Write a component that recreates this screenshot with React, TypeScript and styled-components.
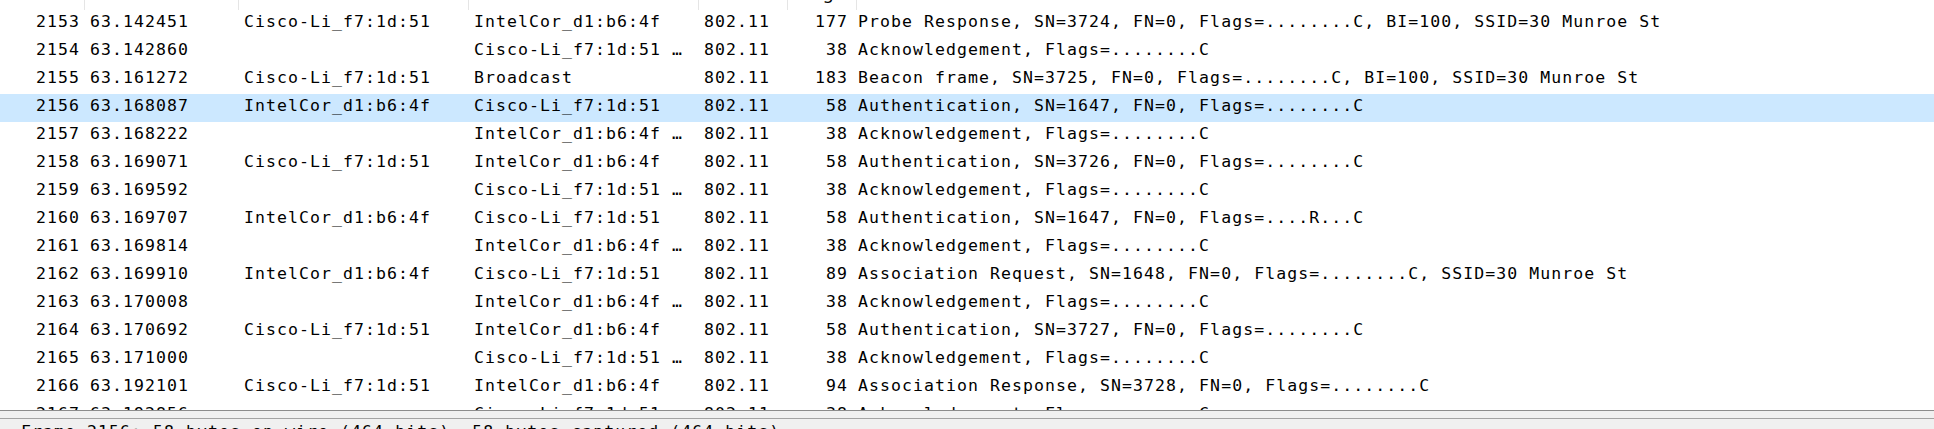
import React from "react";
import styled, { createGlobalStyle } from "styled-components";

const GlobalStyle = createGlobalStyle`
  html, body {
    margin: 0;
    padding: 0;
    background: #ffffff;
  }
  body {
    width: 1934px;
    height: 429px;
    overflow: hidden;
  }
`;

const MONO = `"DejaVu Sans Mono", "Liberation Mono", monospace`;

type Align = "left" | "right";

interface Column {
  key: string;
  label: string;
  width: number | null;
  align: Align;
}

const columns: Column[] = [
  { key: "no", label: "No.", width: 84, align: "right" },
  { key: "time", label: "Time", width: 154, align: "left" },
  { key: "src", label: "Source", width: 230, align: "left" },
  { key: "dst", label: "Destination", width: 230, align: "left" },
  { key: "proto", label: "Protocol", width: 89, align: "left" },
  { key: "len", label: "Length", width: 65, align: "right" },
  { key: "info", label: "Info", width: null, align: "left" },
];

type Packet = [string, string, string, string, string, string, string];

const C = "Cisco-Li_f7:1d:51";
const I = "IntelCor_d1:b6:4f";
const CE = "Cisco-Li_f7:1d:51 \u2026";
const IE = "IntelCor_d1:b6:4f \u2026";
const ACK = "Acknowledgement, Flags=........C";

const packets: Packet[] = [
  ["2153", "63.142451", C, I, "802.11", "177", "Probe Response, SN=3724, FN=0, Flags=........C, BI=100, SSID=30 Munroe St"],
  ["2154", "63.142860", "", CE, "802.11", "38", ACK],
  ["2155", "63.161272", C, "Broadcast", "802.11", "183", "Beacon frame, SN=3725, FN=0, Flags=........C, BI=100, SSID=30 Munroe St"],
  ["2156", "63.168087", I, C, "802.11", "58", "Authentication, SN=1647, FN=0, Flags=........C"],
  ["2157", "63.168222", "", IE, "802.11", "38", ACK],
  ["2158", "63.169071", C, I, "802.11", "58", "Authentication, SN=3726, FN=0, Flags=........C"],
  ["2159", "63.169592", "", CE, "802.11", "38", ACK],
  ["2160", "63.169707", I, C, "802.11", "58", "Authentication, SN=1647, FN=0, Flags=....R...C"],
  ["2161", "63.169814", "", IE, "802.11", "38", ACK],
  ["2162", "63.169910", I, C, "802.11", "89", "Association Request, SN=1648, FN=0, Flags=........C, SSID=30 Munroe St"],
  ["2163", "63.170008", "", IE, "802.11", "38", ACK],
  ["2164", "63.170692", C, I, "802.11", "58", "Authentication, SN=3727, FN=0, Flags=........C"],
  ["2165", "63.171000", "", CE, "802.11", "38", ACK],
  ["2166", "63.192101", C, I, "802.11", "94", "Association Response, SN=3728, FN=0, Flags=........C"],
  ["2167", "63.192856", "", CE, "802.11", "38", ACK],
];

const SELECTED = "2156";

const Window = styled.div`
  display: flex;
  flex-direction: column;
  width: 1934px;
  height: 429px;
  overflow: hidden;
  background: #ffffff;
`;

const PacketList = styled.div`
  flex: 0 0 410px;
  display: flex;
  flex-direction: column;
  overflow: hidden;
  background: #ffffff;
`;

const HeaderBar = styled.div`
  flex: 0 0 10px;
  display: flex;
  overflow: hidden;
  background: #ffffff;
`;

const HeaderCell = styled.div<{ $w: number | null; $align: Align; $first: boolean }>`
  flex: ${(p) => (p.$w === null ? "1 1 auto" : `0 0 ${p.$w}px`)};
  box-sizing: border-box;
  display: flex;
  align-items: flex-end;
  justify-content: ${(p) => (p.$align === "right" ? "flex-end" : "flex-start")};
  border-left: ${(p) => (p.$first ? "none" : "1px solid #e5e5e5")};
  padding: 0 6px 7px 6px;
  font-family: "Noto Sans", "Open Sans", sans-serif;
  font-size: 17px;
  line-height: 20px;
  color: #000000;
  white-space: nowrap;
`;

const Row = styled.div<{ $selected: boolean }>`
  flex: 0 0 28px;
  display: flex;
  align-items: flex-start;
  background: ${(p) => (p.$selected ? "#cce8ff" : "#ffffff")};
`;

const Cell = styled.div<{ $w: number | null; $align: Align }>`
  flex: ${(p) => (p.$w === null ? "1 1 auto" : `0 0 ${p.$w}px`)};
  box-sizing: border-box;
  padding: ${(p) => (p.$align === "right" ? "0 4px 0 6px" : "0 6px 0 6px")};
  text-align: ${(p) => p.$align};
  font-family: ${MONO};
  font-size: 16.5px;
  letter-spacing: 1.07px;
  line-height: 24px;
  color: #000000;
  white-space: pre;
  overflow: hidden;
`;

const Splitter = styled.div`
  flex: 0 0 9px;
  box-sizing: border-box;
  background: #f0f0f0;
  border-top: 1px solid #8c8c8c;
  border-bottom: 1px solid #a3a3a3;
`;

const DetailPane = styled.div`
  flex: 1 1 auto;
  display: flex;
  flex-direction: column;
  padding-top: 1px;
  background: #f0f0f0;
  overflow: hidden;
`;

const DetailRow = styled.div`
  flex: 0 0 28px;
  padding-left: 21px;
  font-family: ${MONO};
  font-size: 16.5px;
  letter-spacing: 1.07px;
  line-height: 24px;
  color: #000000;
  white-space: pre;
`;

export default function App() {
  return (
    <>
      <GlobalStyle />
      <Window>
        <PacketList>
          <HeaderBar>
            {columns.map((c, i) => (
              <HeaderCell key={c.key} $w={c.width} $align={c.align} $first={i === 0}>
                {c.label}
              </HeaderCell>
            ))}
          </HeaderBar>
          {packets.map((p) => (
            <Row key={p[0]} $selected={p[0] === SELECTED}>
              {columns.map((c, i) => (
                <Cell key={c.key} $w={c.width} $align={c.align}>
                  {p[i]}
                </Cell>
              ))}
            </Row>
          ))}
        </PacketList>
        <Splitter />
        <DetailPane>
          <DetailRow>Frame 2156: 58 bytes on wire (464 bits), 58 bytes captured (464 bits)</DetailRow>
        </DetailPane>
      </Window>
    </>
  );
}
